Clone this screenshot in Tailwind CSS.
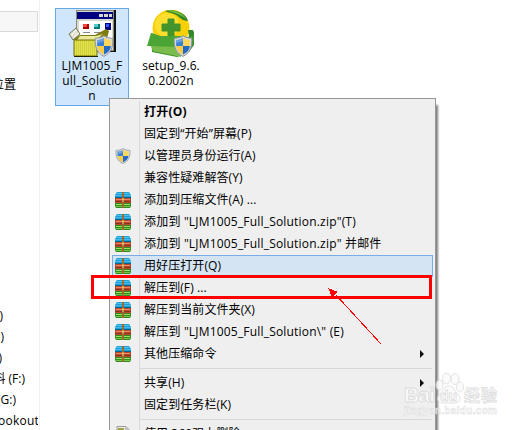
<!DOCTYPE html>
<html lang="zh-CN">
<head>
    <meta charset="UTF-8">
    <meta name="viewport" content="width=device-width, initial-scale=1.0">
    <title>LJM1005_Full_Solution</title>
    <script src="https://cdn.jsdelivr.net/npm/@tailwindcss/browser@4"></script>
</head>
<body class="relative h-[430px] w-[527px] overflow-hidden bg-white font-['Open_Sans','Noto_Sans_CJK_SC',sans-serif] text-[12px] text-black">

    <!-- shared icons -->
    <svg class="hidden">
        <symbol id="shield" viewBox="0 0 16 18" preserveAspectRatio="none">
            <path d="M8 .6C6 2.1 3.6 2.6 1 2.7C.7 9.500 2 14.500 8 17.500C14 14.500 15.300 9.500 15 2.700C12.400 2.600 10 2.100 8 .6Z" fill="#d9dcdd" stroke="#8f979b" stroke-width=".8"/>
            <path d="M8 2.300C6.400 3.400 4.600 3.900 2.500 4V9H8Z" fill="#3a80d6"/>
            <path d="M8 2.300C9.600 3.400 11.400 3.900 13.500 4V9H8Z" fill="#fbd65a"/>
            <path d="M2.500 9C3 12.500 4.800 14.500 8 16V9Z" fill="#f6cb45"/>
            <path d="M13.500 9C13 12.500 11.200 14.500 8 16V9Z" fill="#2469c4"/>
            <path d="M2.500 4C4.500 3.900 6.400 3.400 8 2.300V5C6 6 4 6.400 2.500 6.500Z" fill="#fff" opacity=".25"/>
        </symbol>
        <symbol id="archive" viewBox="0 0 16 16">
            <path d="M2 0H14L16 3V6H0V3Z" fill="#1b9fd8"/>
            <path d="M2 1H14V2H2Z" fill="#52c6ee"/>
            <path d="M0 3H16V4H0Z" fill="#47bce8"/>
            <path d="M0 5H16V6H0Z" fill="#086490"/>
            <path d="M0 6H16V11H0Z" fill="#ba4a2c"/>
            <path d="M1 7H15V8H1Z" fill="#e98663"/>
            <path d="M0 9H16V10H0Z" fill="#8a3320"/>
            <path d="M0 11H16V14L15 16H1L0 14Z" fill="#328b22"/>
            <path d="M1 12H15V13H1Z" fill="#a0de59"/>
            <path d="M1 14H15V15H1Z" fill="#74c542"/>
            <path d="M7 0H9V16H7Z" fill="#9b6a2c"/>
            <path d="M7 6H9V10H7Z" fill="#c9974a"/>
            <path d="M7 7H9V8H7Z" fill="#e8c26a"/>
        </symbol>
        <symbol id="page" viewBox="0 0 16 16">
            <path d="M2 .5H11L14 3.500V16H2Z" fill="#eee" stroke="#999"/>
            <path d="M3 2H9V6H3Z" fill="#a0a23c"/>
            <path d="M10 1V4H14" fill="#bbb"/>
        </symbol>
    </svg>

    <div class="flex h-full">
        <!-- navigation pane -->
        <div class="flex w-10 shrink-0 flex-col overflow-hidden border-r border-[#f0f0f0] pt-[11px]">
            <div class="h-[21px] w-[38px] shrink-0 border border-l-0 border-[#d9d9d9] bg-[#f7f7f7]"></div>
            <div class="mt-[42px] flex h-[22px] w-4 shrink-0 items-center justify-end whitespace-nowrap">位置</div>
            <div class="mt-[209px] flex shrink-0 flex-col whitespace-nowrap leading-[21px]">
                <div class="flex w-[3px] justify-end">(C:)</div>
                <div class="flex w-1 justify-end">(D:)</div>
                <div class="flex w-0.5 justify-end">(E:)</div>
                <div class="flex w-[25px] justify-end">资料 (F:)</div>
                <div class="flex w-4 justify-end">(G:)</div>
                <div class="w-[38px] overflow-hidden"><span class="-ml-0.5 tracking-[0.25px]">ookout.c</span></div>
            </div>
        </div>

        <!-- files -->
        <div class="flex items-start pt-2 pl-[15px] leading-[15px]">
            <div class="flex h-[98px] w-[74px] flex-col items-center border border-[#66a7e8] bg-[#cfe6fd] text-center">
                <svg class="mt-px h-12 w-12 shrink-0" viewBox="0 0 48 48">
                    <path d="M9 0H48V42H9Z" fill="#111"/>
                    <path d="M8 0H46V41H8Z" fill="#8a8a73"/>
                    <path d="M9 1H45V40H9Z" fill="#d8d8d2"/>
                    <path d="M9 2H45V9H9Z" fill="#000080"/>
                    <path d="M31 4H35V7H31ZM36 4H40V7H36ZM41 4H44V7H41Z" fill="#d7d7cf"/>
                    <path d="M11 11H44V38H11Z" fill="#fff"/>
                    <path d="M15 14H21V19H15Z" fill="#a00"/><path d="M15 14H19V17H15Z" fill="#f44"/>
                    <path d="M26 14H32V19H26Z" fill="#087b7d"/><path d="M26 14H30V17H26Z" fill="#5cc"/>
                    <path d="M37 13H43V20H37Z" fill="#000080"/><path d="M38 14H41V17H38Z" fill="#35f"/>
                    <path d="M15 22.500H22M26 22.500H33" stroke="#888"/>
                    <path d="M38 19L41 21L39 28H36L28 31H6V29L12 25H27Z" fill="#7c7c10"/>
                    <path d="M12 26H28L35 24L28 30H9Z" fill="#eaea9a"/>
                    <path d="M6 30H29V46H6Z" fill="#d2d230" stroke="#77770c"/>
                    <path d="M7 32H29M7 34H29M7 36H29M7 38H29M7 40H29M7 42H29M7 44H29" stroke="#efef80" stroke-dasharray="1 1"/>
                    <path d="M1 24L8 18L12 24L5 30Z" fill="#e3e3d4" stroke="#777754"/>
                    <path d="M4 25L8 20M6 27L11 23" stroke="#fff"/>
                    <path d="M6 46.500H30" stroke="#222200"/>
                    <use href="#shield" x="26" y="25" width="20" height="22"/>
                </svg>
                <div class="tracking-[0.2px]">LJM1005_F</div>
                <div class="tracking-[0.2px]">ull_Solutio</div>
                <div>n</div>
            </div>
            <div class="ml-1 flex w-[76px] flex-col items-center pt-0.5 text-center">
                <svg class="h-12 w-12 shrink-0" viewBox="0 0 48 48">
                    <circle cx="24" cy="18" r="18.500" fill="#f9cf05"/>
                    <circle cx="20" cy="15" r="12" fill="#ffe84a" opacity=".6"/>
                    <path d="M18 1C28-2 40 4 41 11C36 11 33 8 30 5.500C26 3 22 3 18 1Z" fill="#318724"/>
                    <path d="M19 .5C27-1 36 3 39 9C33 4 27 2.500 19 .5Z" fill="#74bc42"/>
                    <path d="M21 9H27V14H33V21H27V27H21V21H15V14H21Z" fill="#43942b" stroke="#43942b" stroke-linejoin="round"/>
                    <path d="M4 23L13 26L41 27L47 21V35L42 42L30 47L5 42Z" fill="#3c962a"/>
                    <path d="M4 23L13 26L38 26L34 37L0 36Z" fill="#4aa535"/>
                    <path d="M4 36L34 37V47L6 41Z" fill="#7abb4c"/>
                    <path d="M41 20L46 20L47 26L42 26Z" fill="#34852a"/>
                    <use href="#shield" x="26" y="25" width="20" height="22"/>
                </svg>
                <div class="tracking-[0.1px]">setup_9.6.</div>
                <div class="tracking-[0.1px]">0.2002n</div>
            </div>
        </div>
    </div>

    <!-- context menu -->
    <div class="absolute top-[98px] left-[109px] h-[340px] w-[327px] border border-[#979797] bg-[#efefef] p-0.5 shadow-[3px_6px_2px_-1px_#808080]">
        <div class="absolute inset-y-0.5 left-[29px] w-px bg-[#d7d7d7]"></div>
        <div id="menu" class="relative"></div>
    </div>

    <!-- highlight and pointer -->
    <div class="absolute top-[275px] left-[91px] h-6 w-[341px] border-3 border-[#f00]"></div>
    <svg class="absolute top-[286px] left-[326px] h-[60px] w-[58px]" viewBox="0 0 58 60" shape-rendering="crispEdges">
        <path d="M10 9L55 58" stroke="#f00" fill="none"/>
        <path d="M2 2L12 6L6 11Z" fill="#f00"/>
    </svg>

    <!-- watermark -->
    <svg class="absolute top-[370px] left-[400px] h-[50px] w-[102px] opacity-80" viewBox="0 0 102 50">
        <g fill="#fbfbfb" stroke="#dcdcdc" stroke-width="1">
            <ellipse cx="39.500" cy="15" rx="3.500" ry="5"/>
            <ellipse cx="46.500" cy="8.500" rx="4" ry="5.500"/>
            <ellipse cx="55" cy="9" rx="4" ry="5.500"/>
            <ellipse cx="60" cy="17" rx="3.500" ry="5"/>
            <path d="M49 16C44 16 44 20 40 24C36 28 37 33 43 33H54C60 33 62 29 58 24C54 21 54 16 49 16Z"/>
        </g>
        <g class="font-['Liberation_Sans','Noto_Sans_CJK_SC',sans-serif] font-bold" fill="#fff" stroke="#d6d6d6" stroke-width=".8">
            <text x="4" y="32" font-size="21" textLength="31">Bai</text>
            <text x="40" y="31" font-size="14" textLength="17">du</text>
            <text x="64" y="31" font-size="16" textLength="33">经验</text>
            <text x="4" y="44" font-size="10" stroke-width=".5" textLength="93">jingyan.baidu.com</text>
        </g>
    </svg>

    <script>
        const items = [
            { text: '打开(O)', bold: true },
            { text: '固定到<span class="font-[\'Open_Sans\']">“</span>开始<span class="font-[\'Open_Sans\']">”</span>屏幕(P)' },
            { text: '以管理员身份运行(A)', icon: 'shield' },
            { text: '兼容性疑难解答(Y)' },
            { text: '添加到压缩文件(A) ...', icon: 'archive' },
            { text: '添加到 "LJM1005_Full_Solution.zip"(T)', icon: 'archive', wide: true },
            { text: '添加到 "LJM1005_Full_Solution.zip" 并邮件', icon: 'archive', wide: true },
            { text: '用好压打开(Q)', icon: 'archive', active: true },
            { text: '解压到(F) ...', icon: 'archive' },
            { text: '解压到当前文件夹(X)', icon: 'archive' },
            { text: '解压到 "LJM1005_Full_Solution\\" (E)', icon: 'archive', wide: true },
            { text: '其他压缩命令', icon: 'archive', sub: true },
            null,
            { text: '共享(H)', sub: true },
            { text: '固定到任务栏(K)' },
            null,
            { text: '使用 360强力删除', icon: 'page' },
        ];

        document.getElementById('menu').innerHTML = items.map(item => {
            if (!item) {
                return '<div class="flex h-[7px] pt-[3px] pl-[27px]"><div class="h-px w-[293px] bg-[#d7d7d7]"></div></div>';
            }
            const state = item.active ? 'border-[#78aee5] bg-[#d1e2f2]/90' : 'border-transparent';
            const weight = item.bold ? 'font-bold tracking-[0.2px]' : '';
            const spacing = item.wide ? 'tracking-[0.19px]' : 'tracking-[0.08px]';
            const icon = item.icon ? `<svg class="h-4 w-4"><use href="#${item.icon}"/></svg>` : '';
            const arrow = item.sub ? '<svg class="mr-2 ml-auto h-2 w-1" viewBox="0 0 4 8"><path d="M0 0L4 4L0 8Z" fill="#111"/></svg>' : '';
            return `
                <div class="flex h-[22px] w-[321px] items-center border ${state}">
                    <div class="ml-0.5 w-[29px]">${icon}</div>
                    <div class="whitespace-pre leading-5 ${weight || spacing}">${item.text}</div>
                    ${arrow}
                </div>
            `;
        }).join('');
    </script>

</body>
</html>
